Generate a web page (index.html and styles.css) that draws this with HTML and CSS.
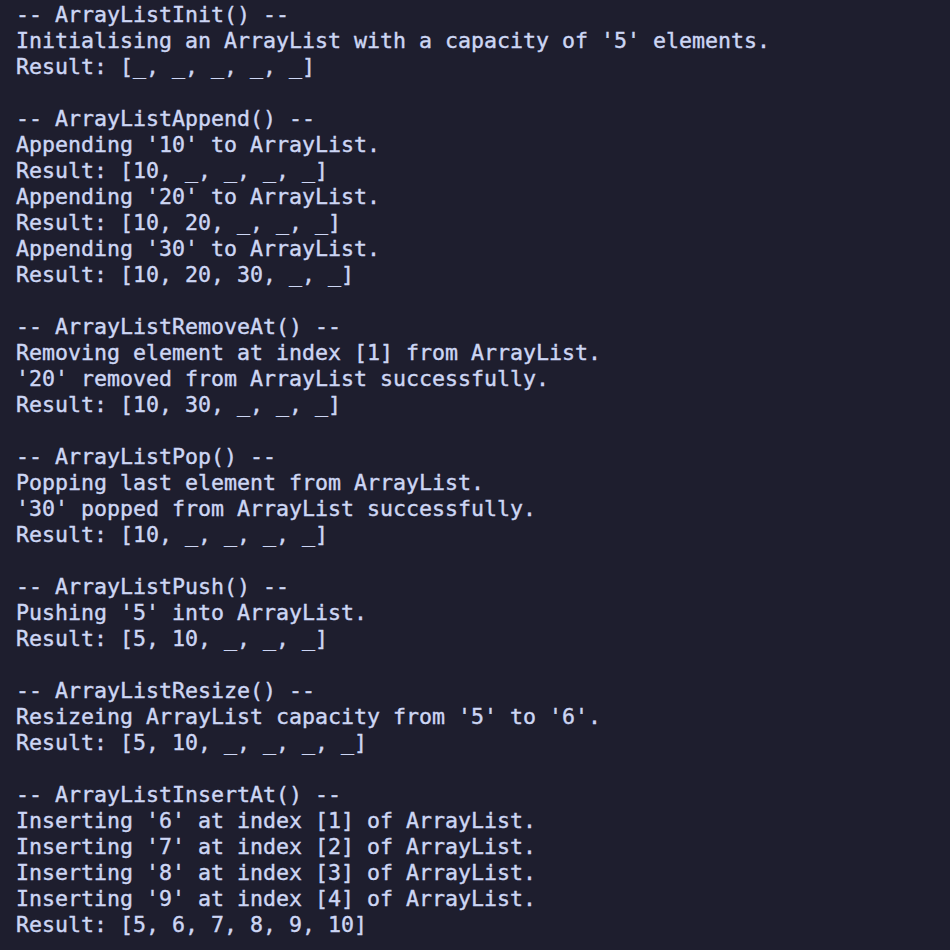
FILE: index.html
```html
<!DOCTYPE html>
<html>
<head>
<meta charset="utf-8">
<link rel="stylesheet" href="styles.css">
</head>
<body>
<pre class="term">-- ArrayListInit() --
Initialising an ArrayList with a capacity of '5' elements.
Result: [_, _, _, _, _]

-- ArrayListAppend() --
Appending '10' to ArrayList.
Result: [10, _, _, _, _]
Appending '20' to ArrayList.
Result: [10, 20, _, _, _]
Appending '30' to ArrayList.
Result: [10, 20, 30, _, _]

-- ArrayListRemoveAt() --
Removing element at index [1] from ArrayList.
'20' removed from ArrayList successfully.
Result: [10, 30, _, _, _]

-- ArrayListPop() --
Popping last element from ArrayList.
'30' popped from ArrayList successfully.
Result: [10, _, _, _, _]

-- ArrayListPush() --
Pushing '5' into ArrayList.
Result: [5, 10, _, _, _]

-- ArrayListResize() --
Resizeing ArrayList capacity from '5' to '6'.
Result: [5, 10, _, _, _, _]

-- ArrayListInsertAt() --
Inserting '6' at index [1] of ArrayList.
Inserting '7' at index [2] of ArrayList.
Inserting '8' at index [3] of ArrayList.
Inserting '9' at index [4] of ArrayList.
Result: [5, 6, 7, 8, 9, 10]</pre>
</body>
</html>
```
FILE: styles.css
```css
html, body {
  margin: 0;
  background: #1e1e2e;
  height: 100%;
}
.term {
  margin: 0;
  padding: 2px 16px 0 16px;
  font-family: "DejaVu Sans Mono", "Liberation Mono", monospace;
  font-size: 21.6px;
  line-height: 26px;
  color: #cdd6f4;
  font-weight: normal;
  -webkit-text-stroke: 0.4px #cdd6f4;
}
```
